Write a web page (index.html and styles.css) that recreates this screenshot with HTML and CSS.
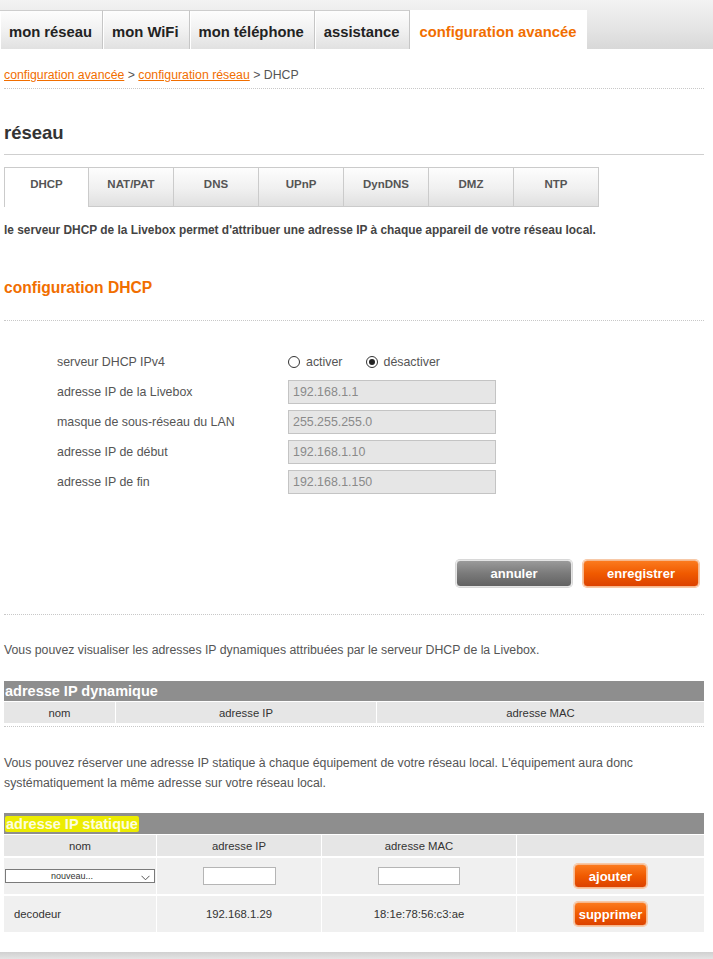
FILE: index.html
```html
<!DOCTYPE html>
<html lang="fr">
<head>
<meta charset="utf-8">
<title>DHCP</title>
<link rel="stylesheet" href="styles.css">
</head>
<body>
<div class="topbar">
  <nav class="mainnav">
    <a class="navtab">mon réseau</a>
    <a class="navtab">mon WiFi</a>
    <a class="navtab">mon téléphone</a>
    <a class="navtab">assistance</a>
    <a class="navtab active">configuration avancée</a>
  </nav>
</div>

<div class="page">
  <div class="breadcrumb"><a class="crumb">configuration avancée</a> &gt; <a class="crumb">configuration réseau</a> &gt; DHCP</div>

  <h1 class="title">réseau</h1>

  <div class="subtabs">
    <span class="subtab active">DHCP</span>
    <span class="subtab">NAT/PAT</span>
    <span class="subtab">DNS</span>
    <span class="subtab">UPnP</span>
    <span class="subtab">DynDNS</span>
    <span class="subtab">DMZ</span>
    <span class="subtab">NTP</span>
  </div>

  <p class="intro">le serveur DHCP de la Livebox permet d'attribuer une adresse IP à chaque appareil de votre réseau local.</p>

  <h2 class="section-title">configuration DHCP</h2>

  <div class="form">
    <div class="row">
      <span class="label">serveur DHCP IPv4</span>
      <div class="radios">
        <span class="radio"></span><span class="radio-label">activer</span>
        <span class="radio checked"></span><span class="radio-label">désactiver</span>
      </div>
    </div>
    <div class="row">
      <span class="label">adresse IP de la Livebox</span>
      <input class="field" type="text" value="192.168.1.1" disabled>
    </div>
    <div class="row">
      <span class="label">masque de sous-réseau du LAN</span>
      <input class="field" type="text" value="255.255.255.0" disabled>
    </div>
    <div class="row">
      <span class="label">adresse IP de début</span>
      <input class="field" type="text" value="192.168.1.10" disabled>
    </div>
    <div class="row">
      <span class="label">adresse IP de fin</span>
      <input class="field" type="text" value="192.168.1.150" disabled>
    </div>
  </div>

  <div class="actions">
    <button class="btn btn-grey">annuler</button>
    <button class="btn btn-orange">enregistrer</button>
  </div>

  <p class="text">Vous pouvez visualiser les adresses IP dynamiques attribuées par le serveur DHCP de la Livebox.</p>

  <table class="grid dyn">
    <tr><th class="grid-title" colspan="3">adresse IP dynamique</th></tr>
    <tr class="cols">
      <td class="c-nom">nom</td>
      <td class="c-ip">adresse IP</td>
      <td>adresse MAC</td>
    </tr>
  </table>

  <p class="text text-static">Vous pouvez réserver une adresse IP statique à chaque équipement de votre réseau local. L'équipement aura donc systématiquement la même adresse sur votre réseau local.</p>

  <table class="grid stat">
    <tr><th class="grid-title" colspan="4"><span class="hl">adresse IP statique</span></th></tr>
    <tr class="cols">
      <td class="s-nom">nom</td>
      <td class="s-ip">adresse IP</td>
      <td class="s-mac">adresse MAC</td>
      <td></td>
    </tr>
    <tr class="data">
      <td class="sel-cell">
        <span class="select">nouveau...
          <svg class="chev" width="9" height="6" viewBox="0 0 9 6"><path d="M0.5 0.8 L4.5 4.8 L8.5 0.8" fill="none" stroke="#555" stroke-width="1"/></svg>
        </span>
      </td>
      <td><input class="small-in ip-in" type="text"></td>
      <td><input class="small-in mac-in" type="text"></td>
      <td><button class="btn btn-orange btn-sm">ajouter</button></td>
    </tr>
    <tr class="data">
      <td class="left">decodeur</td>
      <td>192.168.1.29</td>
      <td>18:1e:78:56:c3:ae</td>
      <td><button class="btn btn-orange btn-sm">supprimer</button></td>
    </tr>
  </table>
</div>

<div class="footer-bar"></div>
</body>
</html>
```

FILE: styles.css
```css
* { box-sizing: border-box; }

body {
  margin: 0;
  font-family: "Liberation Sans", Arial, sans-serif;
  color: #555;
  background: #fff;
}

/* top navigation */
.topbar {
  height: 49px;
  padding-top: 10px;
  background: linear-gradient(to bottom, #f3f3f3 0%, #e4e4e4 60%, #d8d8d8 100%);
}
.mainnav {
  display: flex;
  height: 39px;
}
.navtab {
  display: flex;
  align-items: center;
  height: 39px;
  padding: 3px 10px 0 9px;
  font-size: 14.8px;
  font-weight: bold;
  color: #222;
  background: linear-gradient(to bottom, #fdfdfd 0%, #f1f1f1 50%, #e1e1e1 100%);
  border-top: 1px solid #cdcdcd;
  border-right: 1px solid #c6c6c6;
  box-shadow: inset 1px 0 0 #fff;
}
.navtab.active {
  background: #fff;
  color: #f16e00;
  border-top-color: #fff;
  border-right: none;
  padding-right: 10px;
}

/* page */
.page {
  margin-left: 4px;
  width: 700px;
}

.breadcrumb {
  margin-top: 18px;
  padding-bottom: 5px;
  font-size: 12.3px;
  line-height: 16px;
  color: #555;
  border-bottom: 1px dotted #c8c8c8;
}
.crumb {
  color: #f16e00;
  text-decoration: underline;
}

.title {
  margin: 33px 0 0 0;
  padding-bottom: 10px;
  font-size: 18.5px;
  line-height: 22px;
  color: #333;
  border-bottom: 1px solid #cfcfcf;
}

.subtabs {
  display: flex;
  margin-top: 12px;
  height: 40px;
}
.subtab {
  width: 85px;
  height: 40px;
  display: flex;
  justify-content: center;
  padding-top: 10px;
  font-size: 11.5px;
  font-weight: bold;
  color: #555;
  background: linear-gradient(to bottom, #fdfdfd 0%, #f0f0f0 55%, #e0e0e0 100%);
  border: 1px solid #cbcbcb;
  border-left: none;
}
.subtab.active {
  background: #fff;
  border-left: 1px solid #cbcbcb;
  border-bottom: none;
}

.intro {
  margin: 16px 0 0 0;
  font-size: 11.9px;
  line-height: 14px;
  font-weight: bold;
  color: #444;
}

.section-title {
  margin: 41px 0 0 0;
  padding-bottom: 22px;
  font-size: 15.6px;
  line-height: 20px;
  color: #f16e00;
  border-bottom: 1px dotted #c8c8c8;
}

/* form */
.form {
  margin-top: 26px;
  padding-left: 53px;
}
.row {
  display: flex;
  align-items: center;
  height: 30px;
}
.label {
  width: 231px;
  font-size: 12.4px;
  color: #555;
}
.radios {
  display: flex;
  align-items: center;
  font-size: 12.4px;
  color: #555;
}
.radio {
  width: 12px;
  height: 12px;
  border: 1px solid #333;
  border-radius: 50%;
  background: #fff;
  display: flex;
  align-items: center;
  justify-content: center;
}
.radio.checked::after {
  content: "";
  width: 6px;
  height: 6px;
  border-radius: 50%;
  background: #222;
}
.radio-label {
  margin-left: 6px;
  margin-right: 23px;
}
.field {
  width: 208px;
  height: 24px;
  padding: 0 4px;
  font-family: "Liberation Sans", Arial, sans-serif;
  font-size: 12.4px;
  color: #8a8a8a;
  background: #e6e6e6;
  border: 1px solid #c4c4c4;
  margin: 0;
}

/* buttons */
.actions {
  display: flex;
  justify-content: flex-end;
  gap: 11px;
  margin-top: 63px;
  padding-right: 5px;
  padding-bottom: 27px;
  border-bottom: 1px dotted #c8c8c8;
}
.btn {
  width: 116px;
  height: 27px;
  font-family: "Liberation Sans", Arial, sans-serif;
  font-size: 13px;
  font-weight: bold;
  color: #fff;
  border-radius: 4px;
  border: 1px solid #e4e4e4;
  padding: 0;
  cursor: pointer;
}
.btn-grey {
  background: linear-gradient(to bottom, #9a9a9a 0%, #7a7a7a 50%, #626262 100%);
  box-shadow: 0 0 0 1px #d8d8d8;
}
.btn-orange {
  background: linear-gradient(to bottom, #fb7a1e 0%, #f05a00 50%, #dc4200 100%);
  box-shadow: 0 0 0 1px #f7c9a8;
  border-color: #f6b78c;
}
.btn-sm {
  width: 73px;
  height: 24px;
}

/* texts */
.text {
  margin: 25px 0 0 0;
  font-size: 12.3px;
  line-height: 20px;
  color: #555;
}
.text-static {
  margin-top: 26px;
}

/* tables */
.grid {
  width: 700px;
  border-collapse: separate;
  border-spacing: 0;
  font-size: 11.3px;
  color: #333;
}
.grid td {
  text-align: center;
  border-top: 1px solid #fff;
  border-left: 1px solid #fff;
}
.grid td:first-child {
  border-left: none;
}
.grid-title {
  height: 20px;
  padding: 0 0 0 1px;
  text-align: left;
  font-size: 14.5px;
  font-weight: bold;
  color: #fff;
  background: #8e8e8e;
  line-height: 20px;
}
.dyn {
  margin-top: 21px;
  border-bottom: 1px dotted #c8c8c8;
  padding-bottom: 3px;
}
.cols td {
  height: 22px;
  background: #e6e6e6;
  color: #333;
}
.c-nom { width: 111px; }
.c-ip { width: 261px; }

.stat {
  margin-top: 20px;
}
.stat .grid-title {
  height: 21px;
}
.s-nom { width: 152px; }
.s-ip { width: 165px; }
.s-mac { width: 195px; }
.stat .cols td {
  height: 22px;
}
.data td {
  height: 38px;
  background: #f0f0f0;
  border-top: 2px solid #fff;
}
.data td.left {
  text-align: left;
  padding-left: 10px;
}
.hl {
  background: #ecec00;
  color: #fdfde0;
  padding: 0 1px;
  border-radius: 2px;
}

.sel-cell {
  padding: 0 1px;
  text-align: left;
}
.select {
  position: relative;
  display: block;
  width: 150px;
  height: 14px;
  border: 1px solid #7a7a7a;
  background: #fff;
  font-size: 9px;
  line-height: 12px;
  text-align: center;
  padding-right: 16px;
  color: #333;
}
.chev {
  position: absolute;
  right: 4px;
  top: 5px;
}
.small-in {
  height: 18px;
  border: 1px solid #b5b5b5;
  background: #fff;
  margin: 0;
  padding: 0 2px;
}
.ip-in { width: 73px; }
.mac-in { width: 82px; }

.footer-bar {
  margin-top: 20px;
  height: 7px;
  background: linear-gradient(to bottom, #d0d0d0, #e4e4e4);
}
```
